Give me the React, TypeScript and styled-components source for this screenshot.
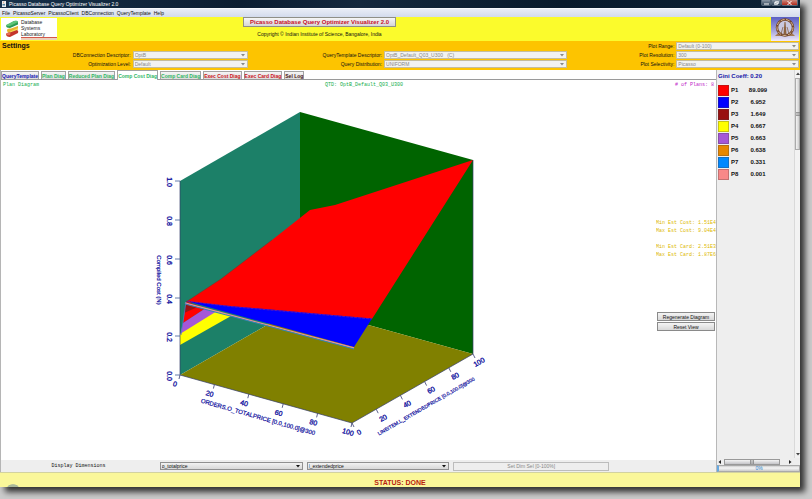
import React from "react";
import styled, { createGlobalStyle } from "styled-components";

const GlobalStyle = createGlobalStyle`
  * { box-sizing: border-box; }
  body {
    margin: 0;
    background: #cbcbcb;
    font-family: "Liberation Sans", Arial, sans-serif;
    font-size: 5px;
    line-height: 7px;
    color: #111;
  }
  button, select { font: inherit; color: inherit; margin: 0; }
`;

const Desktop = styled.div`
  display: flex;
  min-height: 100vh;
  padding: 0 12px 12px 0;
`;

const Frame = styled.div`
  flex: 1;
  min-width: 0;
  display: flex;
  flex-direction: column;
  background: #fff;
  box-shadow: 5px 5px 6px rgba(0, 0, 0, 0.75);
`;

const TitleBar = styled.header`
  display: flex;
  justify-content: space-between;
  align-items: center;
  height: 8px;
  padding: 0 2px;
  color: #fff;
  background: linear-gradient(90deg, #17304a, #0b1d31 30%, #14283d 45%, #081a2c 70%, #0c2135);
`;

const TitleText = styled.span`
  display: flex;
  align-items: center;
  gap: 3px;
`;

const WindowButtons = styled.div`
  display: flex;
  align-self: flex-start;
`;

const WindowButton = styled.button<{ $close?: boolean }>`
  display: grid;
  place-items: center;
  width: ${(p) => (p.$close ? 17 : 10)}px;
  height: 6px;
  padding: 0;
  border: 1px solid #59697a;
  border-top: 0;
  border-radius: 0 0 2px 2px;
  background: ${(p) => (p.$close ? "linear-gradient(#c98a80, #b4291b)" : "linear-gradient(#8b98a6, #33465a)")};
`;

const MenuBar = styled.nav`
  display: flex;
  align-items: center;
  gap: 3px;
  height: 9px;
  padding: 0 2px;
  border-top: 1px solid #f6f8fb;
  background: linear-gradient(#e9edf6, #d3dbec);
`;

const MenuItem = styled.button`
  padding: 0;
  border: 0;
  background: none;
`;

const Banner = styled.div`
  display: grid;
  grid-template-columns: 56px 525fr 189fr 28px;
  height: 24px;
  padding: 0 1px;
  background: #fbfb2c;
`;

const BannerCenter = styled.div`
  display: flex;
  flex-direction: column;
  align-items: center;
  justify-content: space-between;
  padding-bottom: 3px;
`;

const BannerButton = styled.button`
  height: 10px;
  padding: 0 6px;
  border: 1px solid #8f8f86;
  background: linear-gradient(#f6f6f6, #d6d6d6);
  color: #c8102a;
  font-weight: 700;
  font-size: 6px;
`;

const LogoPanel = styled.div`
  align-self: center;
  height: 22px;
  background: #fff;
  display: flex;
  align-items: center;
  gap: 2px;
  padding-left: 4px;
`;

const LogoText = styled.div`
  flex: 1;
  color: #222;
  line-height: 6px;
`;

const LogoRule = styled.div`
  height: 3px;
  border-top: 1px solid #d4584a;
  background: #ecd0bc;
`;

const SettingsPanel = styled.section`
  display: grid;
  grid-template-columns: 129fr 116fr 132fr 183fr 106fr 123fr;
  grid-template-rows: repeat(3, 8px);
  gap: 1px 2px;
  height: 29px;
  padding: 1px 1px 2px 2px;
  background: #fdc400;
  align-items: center;
`;

const SettingsTitle = styled.h1`
  grid-column: 1 / 5;
  margin: 0;
  font-size: 7px;
  line-height: 8px;
  color: #111;
`;

const FieldLabel = styled.label`
  text-align: right;
  white-space: nowrap;
`;

const SelectBox = styled.div<{ $active?: boolean }>`
  display: grid;
  grid-template-columns: 1fr 8px;
  align-items: center;
  min-width: 0;
  height: 8px;
  border: 1px solid ${(p) => (p.$active ? "#909090" : "#c5bd9c")};
  background: ${(p) => (p.$active ? "linear-gradient(#f2f2f2, #d8d8d8)" : "#f2f2f0")};
  color: ${(p) => (p.$active ? "#111" : "#888")};
  svg { grid-area: 1 / 2; justify-self: center; pointer-events: none; }
`;

const Select = styled.select`
  grid-area: 1 / 1 / 2 / 3;
  appearance: none;
  width: 100%;
  height: 6px;
  line-height: 6px;
  padding: 0 1px;
  border: 0;
  border-radius: 0;
  background: none;
  opacity: 1;
`;

const Main = styled.main`
  flex: 1;
  display: flex;
  min-height: 0;
`;

const Workspace = styled.section`
  flex: 1;
  min-width: 0;
  display: flex;
  flex-direction: column;
  border-left: 1px solid #b5b5b5;
`;

const TabList = styled.div`
  display: flex;
  align-items: flex-end;
  gap: 2px;
  height: 10px;
  border-bottom: 1px solid #9a9a9a;
`;

const Tab = styled.button<{ $tone: string; $selected?: boolean }>`
  height: ${(p) => (p.$selected ? 10 : 8)}px;
  margin-bottom: ${(p) => (p.$selected ? -1 : 0)}px;
  padding: 0;
  border: 1px solid #a3a3a3;
  border-bottom: 0;
  background: ${(p) => (p.$selected ? "#fff" : "linear-gradient(#f5f5f5, #dcdcdc)")};
  color: ${(p) => p.$tone};
  font-weight: 700;
  line-height: 6px;
  white-space: nowrap;
`;

const PlotArea = styled.div`
  flex: 1;
  display: grid;
  grid-template: 1fr / 1fr;
  min-height: 0;
`;

const Chart = styled.svg`
  grid-area: 1 / 1;
  width: 100%;
  height: 100%;
  min-height: 0;
`;

const PlotNotes = styled.div`
  grid-area: 1 / 1;
  display: flex;
  flex-direction: column;
  font-family: "Liberation Mono", monospace;
`;

const PlotHeader = styled.div`
  display: grid;
  grid-template-columns: 322fr 350fr auto;
  padding: 2px 2px 0 2px;
  color: #12ad4c;
`;

const PlanCount = styled.span`
  text-align: right;
  color: #c022c8;
`;

const Estimates = styled.div`
  align-self: flex-end;
  width: 60px;
  margin-top: 130px;
  color: #dcb800;
  line-height: 8px;
  overflow: hidden;
  white-space: nowrap;
`;

const EstimateGroup = styled.p`
  margin: 0 0 8px;
`;

const PlotActions = styled.div`
  display: flex;
  flex-direction: column;
  align-self: flex-end;
  gap: 1px;
  width: 59px;
  margin-top: 45px;
  padding-right: 1px;
  font-family: "Liberation Sans", Arial, sans-serif;
`;

const PlotButton = styled.button`
  height: 9px;
  padding: 0;
  border: 1px solid #8a8a8a;
  background: linear-gradient(#f4f4f4, #d8d8d8);
  line-height: 6px;
`;

const DimensionBar = styled.div`
  display: grid;
  grid-template-columns: 155fr 143fr 143fr 156fr 103fr;
  gap: 4px;
  align-items: center;
  height: 12px;
  background: #eeeeee;
`;

const DimensionTitle = styled.span`
  text-align: center;
  font-family: "Liberation Mono", monospace;
`;

const SelectivityButton = styled.button`
  height: 9px;
  padding: 0;
  border: 1px solid #bcbcbc;
  background: #eee;
  color: #888;
  line-height: 6px;
`;

const Sidebar = styled.aside`
  width: 84px;
  display: flex;
  flex-direction: column;
  border-left: 1px solid #b8b8b8;
  background: #eee;
`;

const SidebarBody = styled.div`
  flex: 1;
  display: flex;
`;

const Legend = styled.div`
  flex: 1;
  padding: 3px 0 0 1px;
  color: #111;
  font-weight: 700;
`;

const Gini = styled.h2`
  margin: 0 0 4px;
  color: #1414a8;
  font-size: 6px;
  line-height: 7px;
`;

const LegendTable = styled.table`
  border-collapse: collapse;
  td { padding: 0; height: 12px; font-size: 6px; }
  td:nth-child(1) { width: 13px; }
  td:nth-child(2) { width: 16px; }
  td:nth-child(3) { width: 22px; text-align: center; }
`;

const Swatch = styled.div<{ $color: string }>`
  width: 11px;
  height: 11px;
  border: 1px solid rgba(70, 60, 60, 0.3);
  background: ${(p) => p.$color};
`;

const ScrollTrack = styled.div`
  display: flex;
  flex-direction: column;
  align-items: center;
  gap: 2px;
  width: 6px;
  padding: 2px 0;
  border-left: 1px solid #d9d9d9;
  background: #f2f2f2;
`;

const ScrollThumb = styled.div`
  display: grid;
  place-items: center;
  width: 5px;
  height: 72px;
  border: 1px solid #aaa;
  background: linear-gradient(90deg, #f4f4f4, #cecece);
`;

const Spacer = styled.div`
  flex: 1;
`;

const HorizontalTrack = styled.div`
  display: flex;
  align-items: center;
  gap: 2px;
  height: 7px;
  padding: 0 8px 0 1px;
`;

const HorizontalThumb = styled.div`
  display: grid;
  place-items: center;
  flex: 1;
  height: 6px;
  margin-right: 6px;
  border: 1px solid #999;
  background: linear-gradient(#f4f4f4, #c4c4c8);
`;

const Progress = styled.div`
  height: 7px;
  border: 1px solid #a9a9a9;
  border-left: 2px solid #66a8e0;
  background: linear-gradient(#d0d0d0, #f6f6f6 40%, #cacaca);
  color: #2f86d0;
  line-height: 5px;
  text-align: center;
`;

const StatusBar = styled.footer`
  height: 15px;
  border-top: 1px solid #d2d2a0;
  background: radial-gradient(ellipse 6px 3px at 13px 100%, #a9b89a 80%, transparent) #faf79a;
  color: #b81c10;
  font-size: 7px;
  font-weight: 700;
  line-height: 19px;
  text-align: center;
  overflow: hidden;
`;

const AxisText = styled.text<{ $size?: number }>`
  fill: #0c0c9c;
  stroke: #0c0c9c;
  stroke-width: ${(p) => (p.$size ? 0.2 : 0.3)};
  font-size: ${(p) => p.$size ?? 7}px;
  text-anchor: middle;
  dominant-baseline: central;
`;

const Arrow = ({ color = "#888", turn = 0 }: { color?: string; turn?: number }) => (
  <svg width="4" height="4" viewBox="0 0 4 4" aria-hidden="true">
    <path d="M0 1h4L2 3.5z" fill={color} transform={`rotate(${turn} 2 2)`} />
  </svg>
);

const Grip = ({ vertical }: { vertical?: boolean }) => (
  <svg width="4" height="4" viewBox="0 0 4 4" aria-hidden="true">
    <path d={vertical ? "M.5 0v4M2 0v4M3.5 0v4" : "M0 .5h4M0 2h4M0 3.5h4"} stroke="#777" strokeWidth=".7" />
  </svg>
);

type FieldProps = { id: string; label: string; value: string };

const Field = ({ id, label, value }: FieldProps) => (
  <>
    <FieldLabel htmlFor={id}>{label}</FieldLabel>
    <SelectBox>
      <Select id={id} disabled defaultValue={value}>
        <option>{value}</option>
      </Select>
      <Arrow />
    </SelectBox>
  </>
);

const DimensionSelect = ({ value, name }: { value: string; name: string }) => (
  <SelectBox $active>
    <Select aria-label={name} defaultValue={value}>
      <option>{value}</option>
    </Select>
    <Arrow color="#111" />
  </SelectBox>
);

const LabLogo = () => (
  <LogoPanel>
    <svg width="14" height="18" viewBox="0 0 14 18" aria-hidden="true">
      <path d="M1 5.5 9 1q4-1 4 1.500v2L5 8Q1 8 1 5.500z" fill="#2c9c50" />
      <path d="M1 5 9 1q4-1 4 1L5 6Q1 6.500 1 5z" fill="#5fc479" />
      <path d="M2 10q0-2 4-1.500l7-2.500v4l-8 3q-3 0-3-3z" fill="#e9b52f" />
      <path d="M5 11.500 13 8v2L6 13z" fill="#f5db59" />
      <path d="M1 14q1-2 4-1.500l7-2.500q2 1 1 3l-8 4q-4 0-4-3z" fill="#c4342b" />
      <path d="M1 14q1-2 4-1.500 1 1 0 2.500-3 1-4-1z" fill="#e56a55" />
    </svg>
    <LogoText>
      Database
      <br />
      Systems
      <br />
      Laboratory
      <LogoRule />
    </LogoText>
  </LogoPanel>
);

const InstituteLogo = () => (
  <svg width="28" height="24" viewBox="0 0 28 24" aria-label="Institute emblem">
    <defs>
      <linearGradient id="sky" x1="0" y1="0" x2="0" y2="1">
        <stop offset="0" stopColor="#5a60c4" />
        <stop offset=".6" stopColor="#a9a8dc" />
        <stop offset="1" stopColor="#f0eafa" />
      </linearGradient>
    </defs>
    <rect width="28" height="24" fill="url(#sky)" />
    <path d="M4 19h20l-3-3H7z" fill="#a57b56" />
    <circle cx="14" cy="10.500" r="8" fill="#c9c8e0" stroke="#74452c" strokeWidth="2.500" />
    <circle cx="14" cy="10.500" r="8" fill="none" stroke="#d6ba91" strokeWidth="1" strokeDasharray="4 1.500" />
    <path d="M12.500 17 13.500 5h1L15.500 17z" fill="#8c6240" />
    <path d="M10 17l2-7M18 17l-2-7" fill="none" stroke="#7a5036" strokeWidth=".7" />
  </svg>
);

const zTicks = [
  { y: 181, label: "1.0" },
  { y: 220, label: "0.8" },
  { y: 259, label: "0.6" },
  { y: 298, label: "0.4" },
  { y: 336, label: "0.2" },
  { y: 375, label: "0.0" },
];
const steps = [0, 20, 40, 60, 80, 100];

const CostChart = () => (
  <Chart viewBox="1 80 715 380" role="img" aria-label="Compilation cost surface">
    <path d="M180 181 300 112V306L180 375z" fill="#1c8068" />
    <path d="M300 112 473 160V354L300 306z" fill="#006400" />
    <path d="M180 375 300 306 473 354 352 423z" fill="#808000" />
    <path d="M186 302 195 305 206 308 183 323z" fill="#ff0000" />
    <path d="M186 302 200 306 184 313z" fill="#981414" />
    <path d="M183 323 206 308 218 312 180 335z" fill="#a557d8" />
    <path d="M180 334 217 311 231 316 180 345z" fill="#ffff00" />
    <path d="M186 302 221 279 272 240 310 210 335 205 473 160 372 319 230 307z" fill="#ff0000" />
    <path d="M186 302 221 279 272 240" fill="none" stroke="#7c3424" strokeWidth=".6" />
    <path d="M186 301 230 306 372 318.500 354 347z" fill="#0000ff" />
    <path d="M187 301 230 306.500 372 319" fill="none" stroke="#7820a0" strokeWidth=".7" strokeDasharray="3 1" />
    <path d="M185 303 354 348" stroke="#e89098" strokeWidth="1.400" />
    <path d="M185 304 354 349" stroke="#2f86b4" strokeWidth="1" />
    <path d="M186 302 181 335" stroke="#4a78cc" strokeWidth=".8" />
    <path d="M180 181V375L352 423 473 354V160" fill="none" stroke="#343c6c" strokeWidth=".7" />
    {zTicks.map((tick) => (
      <g key={tick.label}>
        <path d={`M175 ${tick.y}h5`} stroke="#3c5c98" strokeWidth=".8" />
        <AxisText transform={`translate(169 ${tick.y + 1}) rotate(90)`}>{tick.label}</AxisText>
      </g>
    ))}
    {steps.map((step, i) => (
      <g key={step}>
        <path d={`M${180 + i * 34.400} ${375 + i * 9.600}l-1 4`} stroke="#333a70" strokeWidth=".8" />
        <AxisText transform={`translate(${175 + i * 34.600} ${384 + i * 9.600}) rotate(16)`}>{step}</AxisText>
        <path d={`M${352 + i * 24.200} ${423 - i * 13.800}l2 4`} stroke="#333a70" strokeWidth=".8" />
        <AxisText transform={`translate(${359 + i * 24} ${432 - i * 14}) rotate(-30)`}>{step}</AxisText>
      </g>
    ))}
    <AxisText $size={6} transform="translate(159 280) rotate(90)">Compiled Cost (N)</AxisText>
    <AxisText $size={6} transform="translate(258 417) rotate(16)">ORDERS.O_TOTALPRICE [0.0,100.0]@300</AxisText>
    <AxisText $size={5} transform="translate(426 406) rotate(-30)">LINEITEM.L_EXTENDEDPRICE [0.0,100.0]@300</AxisText>
  </Chart>
);

const menus = ["File", "PicassoServer", "PicassoClient", "DBConnection", "QueryTemplate", "Help"];

const tabs = [
  { label: "QueryTemplate", tone: "#1a1ab4" },
  { label: "Plan Diag", tone: "#31b765" },
  { label: "Reduced Plan Diag", tone: "#31b765" },
  { label: "Comp Cost Diag", tone: "#31b765", selected: true },
  { label: "Comp Card Diag", tone: "#31b765" },
  { label: "Exec Cost Diag", tone: "#cc1522" },
  { label: "Exec Card Diag", tone: "#cc1522" },
  { label: "Sel Log", tone: "#4a1414" },
];

const plans = [
  { name: "P1", value: "89.099", color: "#ff0000" },
  { name: "P2", value: "6.952", color: "#0000ff" },
  { name: "P3", value: "1.649", color: "#981010" },
  { name: "P4", value: "0.667", color: "#ffff00" },
  { name: "P5", value: "0.663", color: "#a557d8" },
  { name: "P6", value: "0.638", color: "#e88800" },
  { name: "P7", value: "0.331", color: "#0088ff" },
  { name: "P8", value: "0.001", color: "#f88888" },
];

export default function App() {
  return (
    <>
      <GlobalStyle />
      <Desktop>
        <Frame>
          <TitleBar>
            <TitleText>
              <svg width="4" height="6" viewBox="0 0 4 6" aria-hidden="true">
                <path d="M0 0h4v6H0z" fill="#e8edf2" />
                <path d="M2 .5q-1 1 0 2" stroke="#d07030" strokeWidth=".6" fill="none" />
                <path d="M.5 3h2.500v1.500h-2.500z" fill="#5382a1" />
              </svg>
              Picasso Database Query Optimizer Visualizer 2.0
            </TitleText>
            <WindowButtons>
              <WindowButton aria-label="Minimize">
                <svg width="5" height="4" viewBox="0 0 5 4"><path d="M0 3h5" stroke="#fff" /></svg>
              </WindowButton>
              <WindowButton aria-label="Restore">
                <svg width="5" height="4" viewBox="0 0 5 4"><path d="M1.500.5h3v2h-3zM.5 1.500h3v2h-3z" stroke="#fff" strokeWidth=".7" fill="none" /></svg>
              </WindowButton>
              <WindowButton $close aria-label="Close">
                <svg width="5" height="4" viewBox="0 0 5 4"><path d="M.5 0l4 4M4.500 0l-4 4" stroke="#fff" /></svg>
              </WindowButton>
            </WindowButtons>
          </TitleBar>
          <MenuBar>
            {menus.map((menu) => (
              <MenuItem key={menu}>{menu}</MenuItem>
            ))}
          </MenuBar>
          <Banner>
            <LabLogo />
            <BannerCenter>
              <BannerButton>Picasso Database Query Optimizer Visualizer 2.0</BannerButton>
              <span>Copyright © Indian Institute of Science, Bangalore, India</span>
            </BannerCenter>
            <Spacer />
            <InstituteLogo />
          </Banner>
          <SettingsPanel>
            <SettingsTitle>Settings</SettingsTitle>
            <Field id="range" label="Plot Range:" value="Default (0-100)" />
            <Field id="connection" label="DBConnection Descriptor:" value="OptB" />
            <Field id="template" label="QueryTemplate Descriptor:" value={"OptB_Default_Q03_U300\u00a0\u00a0\u00a0(C)"} />
            <Field id="resolution" label="Plot Resolution:" value="300" />
            <Field id="level" label="Optimization Level:" value="Default" />
            <Field id="distribution" label="Query Distribution:" value="UNIFORM" />
            <Field id="selectivity" label="Plot Selectivity:" value="Picasso" />
          </SettingsPanel>
          <Main>
            <Workspace>
              <TabList role="tablist">
                {tabs.map((tab) => (
                  <Tab key={tab.label} role="tab" aria-selected={!!tab.selected} $tone={tab.tone} $selected={tab.selected}>
                    {tab.label}
                  </Tab>
                ))}
              </TabList>
              <PlotArea>
                <CostChart />
                <PlotNotes>
                  <PlotHeader>
                    <span>Plan Diagram</span>
                    <span>QTD: OptB_Default_Q03_U300</span>
                    <PlanCount># of Plans: 8</PlanCount>
                  </PlotHeader>
                  <Estimates>
                    <EstimateGroup>
                      Min Est Cost: 1.51E4
                      <br />
                      Max Est Cost: 9.04E4
                    </EstimateGroup>
                    <EstimateGroup>
                      Min Est Card: 2.51E3
                      <br />
                      Max Est Card: 1.87E6
                    </EstimateGroup>
                  </Estimates>
                  <PlotActions>
                    <PlotButton>Regenerate Diagram</PlotButton>
                    <PlotButton>Reset View</PlotButton>
                  </PlotActions>
                </PlotNotes>
              </PlotArea>
              <DimensionBar>
                <DimensionTitle>Display Dimensions</DimensionTitle>
                <DimensionSelect name="First dimension" value="o_totalprice" />
                <DimensionSelect name="Second dimension" value="l_extendedprice" />
                <SelectivityButton disabled>Set Dim Sel [0-100%]</SelectivityButton>
              </DimensionBar>
            </Workspace>
            <Sidebar>
              <SidebarBody>
                <Legend>
                  <Gini>Gini Coeff: 0.20</Gini>
                  <LegendTable>
                    <tbody>
                      {plans.map((plan) => (
                        <tr key={plan.name}>
                          <td><Swatch $color={plan.color} /></td>
                          <td>{plan.name}</td>
                          <td>{plan.value}</td>
                        </tr>
                      ))}
                    </tbody>
                  </LegendTable>
                </Legend>
                <ScrollTrack>
                  <Arrow color="#444" turn={180} />
                  <ScrollThumb><Grip /></ScrollThumb>
                  <Spacer />
                  <Arrow color="#444" />
                </ScrollTrack>
              </SidebarBody>
              <HorizontalTrack>
                <Arrow color="#222" turn={90} />
                <HorizontalThumb><Grip vertical /></HorizontalThumb>
                <Arrow color="#222" turn={-90} />
              </HorizontalTrack>
              <Progress>0%</Progress>
            </Sidebar>
          </Main>
          <StatusBar>STATUS: DONE</StatusBar>
        </Frame>
      </Desktop>
    </>
  );
}
